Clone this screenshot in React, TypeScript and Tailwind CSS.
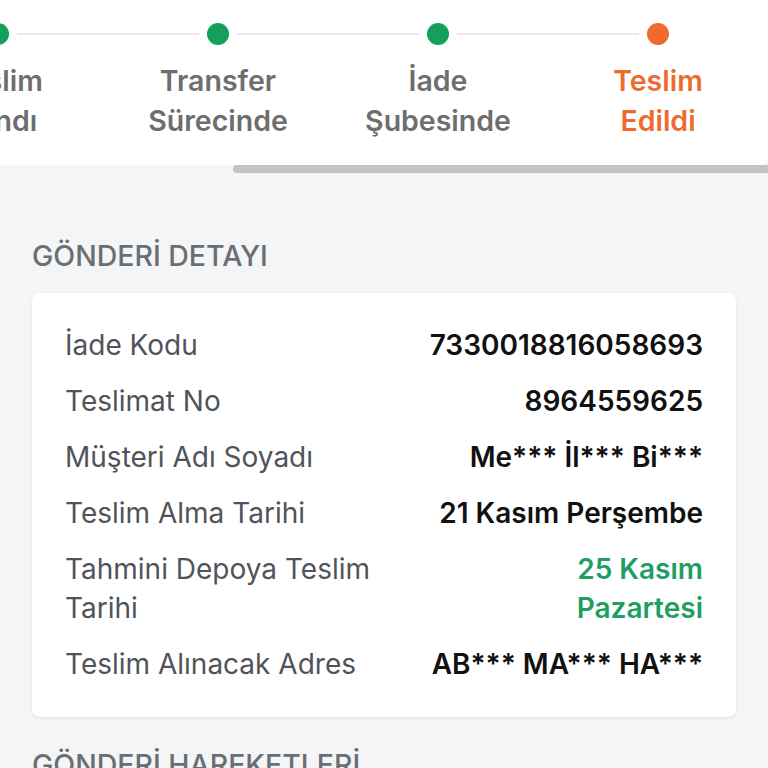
import React from 'react';

type Step = { label: string[]; color: 'green' | 'orange' };

const steps: Step[] = [
  { label: ['Teslim', 'Alındı'], color: 'green' },
  { label: ['Transfer', 'Sürecinde'], color: 'green' },
  { label: ['İade', 'Şubesinde'], color: 'green' },
  { label: ['Teslim', 'Edildi'], color: 'orange' },
];

const details: { label: string; value: string; highlight?: boolean }[] = [
  { label: 'İade Kodu', value: '7330018816058693' },
  { label: 'Teslimat No', value: '8964559625' },
  { label: 'Müşteri Adı Soyadı', value: 'Me*** İl*** Bi***' },
  { label: 'Teslim Alma Tarihi', value: '21 Kasım Perşembe' },
  { label: 'Tahmini Depoya Teslim Tarihi', value: '25 Kasım Pazartesi', highlight: true },
  { label: 'Teslim Alınacak Adres', value: 'AB*** MA*** HA***' },
];

const StepTracker: React.FC = () => (
  <div className="relative h-[173px] overflow-hidden">
    <div className="absolute left-[-112px] top-0 flex h-[165px] w-[880px] rounded-b-lg bg-white">
      {steps.map((step, i) => (
        <div key={i} className="flex w-[220px] flex-col items-center">
          <div className="relative mt-[23px] flex h-[22px] w-full items-center justify-center">
            {i > 0 && (
              <div className="absolute left-0 right-[calc(50%+19px)] top-[10px] h-[2px] bg-[#ebebeb]" />
            )}
            {i < steps.length - 1 && (
              <div className="absolute left-[calc(50%+19px)] right-0 top-[10px] h-[2px] bg-[#ebebeb]" />
            )}
            <div
              className={
                step.color === 'orange'
                  ? 'h-[22px] w-[22px] rounded-full bg-[#ef6a2b]'
                  : 'h-[22px] w-[22px] rounded-full bg-[#14a05a]'
              }
            />
          </div>
          <div
            className={
              step.color === 'orange'
                ? 'mt-[16px] whitespace-nowrap text-center text-[28.5px] font-semibold leading-[40px] text-[#ee6b2f]'
                : 'mt-[16px] whitespace-nowrap text-center text-[28.5px] font-semibold leading-[40px] text-[#6e6e6e]'
            }
          >
            {step.label[0]}
            <br />
            {step.label[1]}
          </div>
        </div>
      ))}
    </div>
    <div className="absolute left-[233px] right-0 top-[165px] h-[8px] rounded-l-sm bg-[#c3c3c3]" />
  </div>
);

export default function App() {
  return (
    <div
      className="min-h-[768px] w-[768px] overflow-hidden bg-[#f4f5f7]"
      style={{ fontFamily: 'Inter, "Noto Sans", sans-serif' }}
    >
      <StepTracker />

      <div className="px-8">
        <h2 className="mt-[63px] text-[28.5px] font-medium leading-[39px] text-[#6b6e73]">
          GÖNDERİ DETAYI
        </h2>

        <div className="mt-[18px] flex flex-col gap-[17px] rounded-lg bg-white px-[33px] py-[33px] shadow-[0_1px_3px_rgba(0,0,0,0.08)]">
          {details.map((row) => (
            <div key={row.label} className="flex justify-between gap-4 text-[28px] leading-[39px]">
              <span className="text-[#50545a]">{row.label}</span>
              <span
                className={
                  row.highlight
                    ? 'text-right font-semibold text-[#1f9e63]'
                    : 'text-right font-semibold text-[#111111]'
                }
              >
                {row.value}
              </span>
            </div>
          ))}
        </div>

        <h2 className="mt-[28px] text-[28.5px] font-medium leading-[39px] text-[#6b6e73]">
          GÖNDERİ HAREKETLERİ
        </h2>
      </div>
    </div>
  );
}
